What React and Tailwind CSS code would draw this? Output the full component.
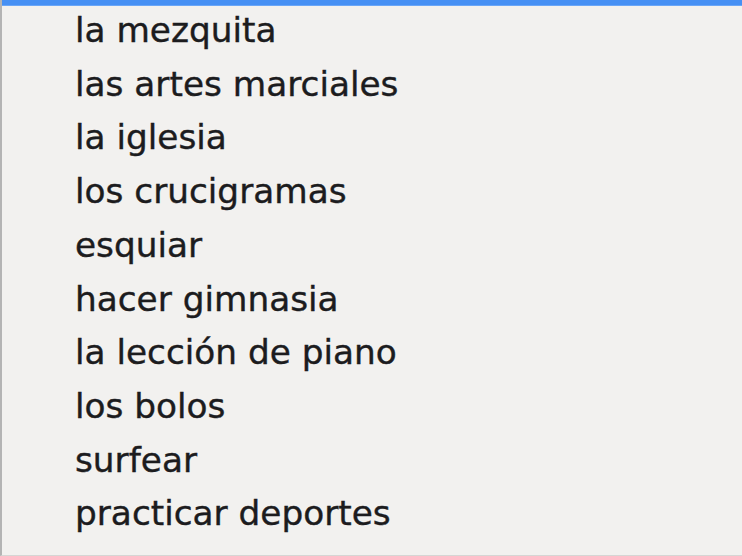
import React from "react";

// Options of the open pop-up menu, top to bottom
const OPTIONS = [
  "la mezquita",
  "las artes marciales",
  "la iglesia",
  "los crucigramas",
  "esquiar",
  "hacer gimnasia",
  "la lección de piano",
  "los bolos",
  "surfear",
  "practicar deportes",
];

const App = () => {
  return (
    <div
      className="w-[742px] h-[556px] overflow-hidden bg-[#f2f1ef] border-l-2 border-b border-l-[#b4b4b4] border-b-[#d6d6d4] flex flex-col"
      style={{ fontFamily: '"DejaVu Sans", Verdana, sans-serif' }}
    >
      {/* bottom edge of the highlighted item above */}
      <div className="h-[6px] bg-[#4690f4] border-b border-[#6aa6f7]" />
      <ul className="-mt-[2px] pl-[73px] text-[34.3px] leading-[53.7px] text-[#1c1c1e] [-webkit-text-stroke:0.4px_#1c1c1e]">
        {OPTIONS.map((option) => (
          <li key={option} className="whitespace-nowrap">
            {option}
          </li>
        ))}
      </ul>
    </div>
  );
};

export default App;
